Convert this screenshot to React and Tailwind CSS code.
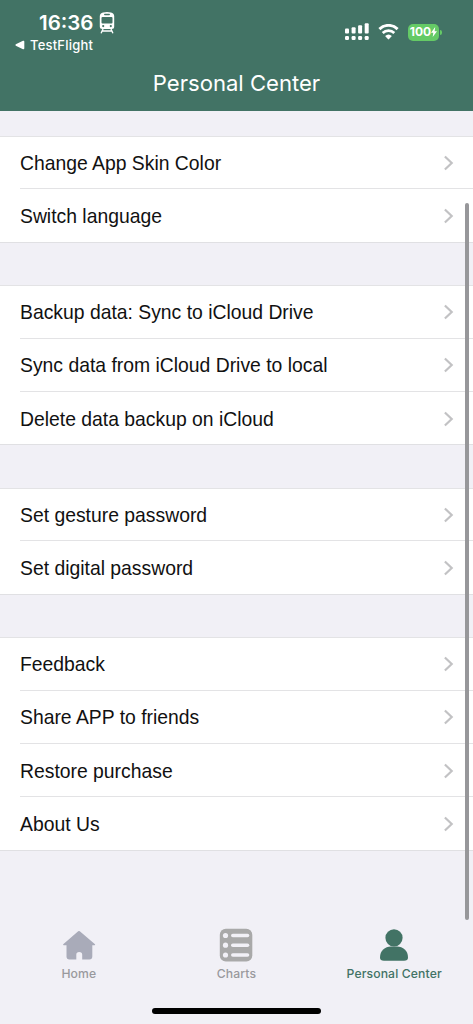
import { Fragment } from "react";

const groups = [
  ["Change App Skin Color", "Switch language"],
  [
    "Backup data: Sync to iCloud Drive",
    "Sync data from iCloud Drive to local",
    "Delete data backup on iCloud",
  ],
  ["Set gesture password", "Set digital password"],
  ["Feedback", "Share APP to friends", "Restore purchase", "About Us"],
];

function TrainIcon() {
  return (
    <svg width="16" height="22" viewBox="0 0 16 22" fill="none">
      <path
        fill="#fff"
        fillRule="evenodd"
        d="M4 .5Q8-.4 12 .5Q15 1.2 15.200 4V14.500Q15.200 17 12.700 17H3.300Q.8 17 .8 14.500V4Q1 1.200 4 .5ZM5.800 1.800a.7.7 0 0 0 0 1.500h4.400a.7.7 0 0 0 0-1.500ZM3.500 5Q2.500 5 2.500 6V10.500Q2.500 11.500 3.500 11.500H12.500Q13.500 11.500 13.500 10.500V6Q13.500 5 12.500 5ZM4.200 13a1.100 1.100 0 1 0 0 2.200 1.100 1.100 0 0 0 0-2.200ZM11.800 13a1.100 1.100 0 1 0 0 2.200 1.100 1.100 0 0 0 0-2.200Z"
      />
      <path
        d="M3.800 17.500 2.300 20.800M12.200 17.500l1.500 3.300M3.200 19h9.600"
        stroke="#fff"
        strokeWidth="1.400"
        strokeLinecap="round"
      />
    </svg>
  );
}

function SignalIcon() {
  return (
    <svg width="24" height="18" viewBox="0 0 24 18" fill="#fff">
      <rect x="0" y="5.600" width="4" height="5" rx="1" />
      <rect x="6.600" y="4.300" width="4" height="6.300" rx="1" />
      <rect x="13.100" y="2.300" width="4" height="8.300" rx="1" />
      <rect x="19.700" y="0.200" width="4" height="10.400" rx="1" />
      <rect x="0" y="13" width="4" height="4" rx="1.200" />
      <rect x="6.600" y="13" width="4" height="4" rx="1.200" />
      <rect x="13.100" y="13" width="4" height="4" rx="1.200" />
      <rect x="19.700" y="13" width="4" height="4" rx="1.200" />
    </svg>
  );
}

function WifiIcon() {
  return (
    <svg width="21" height="16" viewBox="0 0 21 16" fill="none">
      <path
        d="M1.400 5.100C6.500.1 14.500.1 19.600 5.100"
        stroke="#fff"
        strokeWidth="2.900"
      />
      <path
        d="M4.700 8.900C8 5.800 13 5.800 16.300 8.900"
        stroke="#fff"
        strokeWidth="2.700"
      />
      <path
        d="M7.100 12Q10.500 9 13.900 12L11.100 15.100Q10.500 15.700 9.900 15.100Z"
        fill="#fff"
      />
    </svg>
  );
}

function Battery() {
  return (
    <div className="flex items-center gap-px">
      <div className="flex h-[17px] w-[31px] items-center justify-center rounded-[5px] bg-[#65ca66]">
        <span className="font-['Inter'] text-[12px] leading-none font-bold text-white">
          100
        </span>
        <svg width="6" height="10" viewBox="0 0 6 10" fill="#fff">
          <path d="M4.200 0 0 5.700h2.300L1.700 10 6 4.200H3.600Z" />
        </svg>
      </div>
      <div className="h-[5px] w-[2px] rounded-r bg-[#65ca66]" />
    </div>
  );
}

function Chevron() {
  return (
    <svg width="10" height="16" viewBox="0 0 10 16" fill="none">
      <path d="m.9 1.500 6.800 6.500-6.800 6.500" stroke="#c2c2c4" strokeWidth="2.200" />
    </svg>
  );
}

function Row({ label, last }) {
  return (
    <div className="pl-5">
      <button
        className={`flex h-[53.33px] w-full items-center justify-between border-b pt-px pr-[19px] ${
          last ? "border-transparent" : "border-[#e3e3e5]"
        }`}
      >
        <span className="font-['Liberation_Sans',sans-serif] text-[19.350px] leading-6 whitespace-nowrap text-[#111]">
          {label}
        </span>
        <Chevron />
      </button>
    </div>
  );
}

function HomeIcon() {
  return (
    <svg width="34" height="34" viewBox="0 0 34 34" fill="#a9abb9">
      <path d="M16.200 3.300Q17 2.600 17.800 3.300L33 16.300Q33.500 17.200 32.500 17.200H30.300V28.500Q30.300 31.500 27.300 31.500H20.200V26.800Q20.200 24.100 17.200 24.100Q14.300 24.100 14.300 26.800V31.500H7.500Q4.500 31.500 4.500 28.500V17.200H1.800Q.8 17.200 1.200 16.300Z" />
    </svg>
  );
}

function ChartsIcon() {
  return (
    <svg width="34" height="34" viewBox="0 0 34 34">
      <rect x="0.800" y="0.700" width="32.500" height="32.700" rx="6" fill="#a9a9a9" />
      {[7.5, 17.2, 27].map((y) => (
        <Fragment key={y}>
          <circle cx="6.500" cy={y} r="2.600" fill="#f2f1f7" />
          <rect x="12" y={y - 1.8} width="18.300" height="3.600" rx="1.800" fill="#f2f1f7" />
        </Fragment>
      ))}
    </svg>
  );
}

function PersonIcon() {
  return (
    <svg width="34" height="34" viewBox="0 0 34 34" fill="#427365">
      <circle cx="17" cy="9.800" r="8.600" />
      <path d="M3 29.500C3 22.500 8 18.500 14 18.500H20C26 18.500 31 22.500 31 29.500Q31 32.700 27 32.700H7Q3 32.700 3 29.500Z" />
    </svg>
  );
}

const tabs = [
  { label: "Home", icon: HomeIcon },
  { label: "Charts", icon: ChartsIcon },
  { label: "Personal Center", icon: PersonIcon, active: true },
];

function App() {
  return (
    <div className="relative flex h-[1024px] w-[473px] flex-col overflow-hidden bg-[#f1f0f6] font-['Inter',sans-serif]">
      {/* Header */}
      <header className="h-[111px] shrink-0 bg-[#427365] text-white">
        <div className="flex h-[56px] justify-between pt-[11px] pr-[31px] pl-[15px]">
          <div>
            <div className="flex h-[23px] items-center gap-[6px] pl-6">
              <span className="text-[20.500px] leading-[23px] font-semibold">16:36</span>
              <TrainIcon />
            </div>
            <div className="flex h-[21px] items-center gap-[5px]">
              <svg width="10" height="10" viewBox="0 0 10 10" fill="#fff">
                <path d="M.8 4.300Q0 5 .8 5.700L8 9.200Q9.300 9.600 9.300 8.300V1.700Q9.300.4 8 .8Z" />
              </svg>
              <span className="text-[13px] leading-4 font-medium tracking-[0.2px]">
                TestFlight
              </span>
            </div>
          </div>
          <div className="mt-3 flex h-[18px] items-center">
            <SignalIcon />
            <div className="w-[9px]" />
            <WifiIcon />
            <div className="w-[9px]" />
            <Battery />
          </div>
        </div>
        <h1 className="text-center text-[22.100px] leading-[54px] font-normal">
          Personal Center
        </h1>
      </header>

      {/* Settings list */}
      <main className="flex flex-1 flex-col gap-[42.670px] pt-[25px]">
        {groups.map((group) => (
          <section
            key={group[0]}
            className="bg-white shadow-[inset_0_1px_0_#e3e3e5,inset_0_-1px_0_#e0e0e3]"
          >
            {group.map((label, i) => (
              <Row key={label} label={label} last={i === group.length - 1} />
            ))}
          </section>
        ))}
      </main>

      {/* Scroll indicator */}
      <div className="absolute top-[203px] right-[4px] h-[717px] w-[4px] rounded-full bg-[#97979a]" />

      {/* Tab bar */}
      <nav className="grid h-[96px] shrink-0 grid-cols-3">
        {tabs.map(({ label, icon: Icon, active }) => (
          <button key={label} className="flex flex-col items-center">
            <Icon />
            <span
              className={`mt-[4px] text-[12.200px] leading-4 font-medium tracking-[0.120px] whitespace-nowrap ${
                active ? "text-[#427365]" : "text-[#99999d]"
              }`}
            >
              {label}
            </span>
          </button>
        ))}
      </nav>
      <div className="absolute bottom-[10px] left-[152px] h-[6px] w-[169px] rounded-full bg-black" />
    </div>
  );
}

export default App;
